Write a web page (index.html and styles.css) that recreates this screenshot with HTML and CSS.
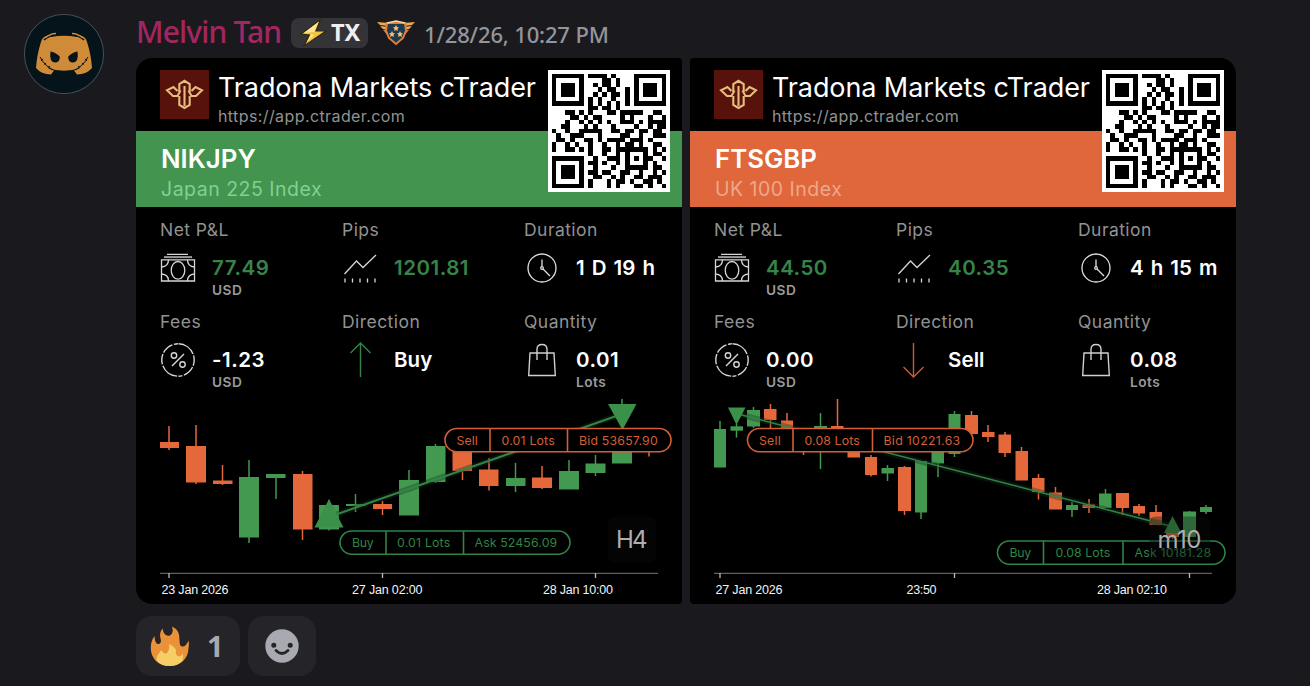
FILE: index.html
```html
<!DOCTYPE html>
<html lang="en">
<head>
<meta charset="utf-8">
<title>Trade results</title>
<link rel="stylesheet" href="styles.css">
</head>
<body>
<svg class="defs" width="0" height="0">
  <symbol id="logo" viewBox="0 0 49 49">
    <g fill="none" stroke="#e6bd7c" stroke-width="2.100">
      <path d="M20.500 20.500L17.500 26H13L7 20.300L13.500 17L17.500 21M19.300 23V14L24.500 10.800L29.700 14V23M28.500 20.500L31.500 26H36L42 20.300L35.500 17L31.500 21"/>
      <path d="M24.500 16V36M19.300 26V35L24.500 38L29.700 35V26"/>
    </g>
  </symbol>
  <symbol id="cash" viewBox="0 0 36 36">
    <g fill="none" stroke="#d6d6d6" stroke-width="1.300">
      <path d="M7 4.300H28M1.500 9.800H34.500V31H1.500Z"/>
      <ellipse cx="18" cy="20.300" rx="6.800" ry="8.800"/>
      <path d="M8.500 9.800Q8.500 16.500 1.500 17M27.500 9.800Q27.500 16.500 34.500 17M1.500 24Q8.500 24.500 8.500 31M34.500 24Q27.500 24.500 27.500 31"/>
    </g>
    <path d="M4 7.100H32" stroke="#9a9a9a" stroke-width="2"/>
  </symbol>
  <symbol id="pips" viewBox="0 0 36 36">
    <g fill="none" stroke="#d6d6d6" stroke-width="1.300">
      <path d="M2.500 24L14.500 11L21 17.500L34 5"/>
      <path d="M3 28.500V32.500M10.500 28.500V32.500M18 28.500V32.500M25.500 28.500V32.500M33 28.500V32.500"/>
    </g>
  </symbol>
  <symbol id="clock" viewBox="0 0 36 36">
    <g fill="none" stroke="#e0e0e0" stroke-width="1.300">
      <circle cx="18" cy="18" r="14"/><circle cx="18" cy="18" r="1.300"/>
      <path d="M18 9.500V16.700M19 19L26 26"/>
    </g>
  </symbol>
  <symbol id="fees" viewBox="0 0 36 36">
    <g fill="none" stroke="#d6d6d6" stroke-width="1.400">
      <circle cx="18" cy="18" r="16.200" stroke-dasharray="18.500 1.500 10.500 1.500 12 1.500 4 1.400" transform="rotate(-88 18 18)"/>
      <circle cx="14" cy="13.500" r="2.700"/><circle cx="22.500" cy="22.500" r="2.700"/>
      <path d="M24 12L12 24"/>
    </g>
  </symbol>
  <symbol id="arrow" viewBox="0 0 36 36">
    <path d="M18.500 35V1M8.500 11L18.500 1L28.500 11" fill="none" stroke="currentColor" stroke-width="1.400"/>
  </symbol>
  <symbol id="bag" viewBox="0 0 36 36">
    <g fill="none" stroke="#cfcfcf" stroke-width="1.400">
      <path d="M6 11H30L31.300 33.500H4.700Z"/>
      <path d="M13 18V7.500Q13 2.500 18 2.500T23 7.500V18"/>
    </g>
  </symbol>
</svg>

<article class="message">
  <svg class="avatar" viewBox="0 0 80 80">
    <circle cx="40" cy="40" r="39.600" fill="#05131a" stroke="#526066" stroke-width=".8"/>
    <path d="M17 28Q18 23.500 22 22L28 20.500L27 23Q40 20.500 53 23L52 20.500L58 22Q62 23.500 63 28Q67 40 68 54Q63 60 53 60.500L50 56.500Q54 55.500 57 53.500Q40 60 23 53.500Q26 55.500 30 56.500L27 60.500Q17 60 12 54Q13 40 17 28Z" fill="#d08b39"/>
    <path d="M20 26Q25 21.500 33 20.500M60 26Q55 21.500 47 20.500" stroke="#05131a" stroke-width="1.600" fill="none"/>
    <path d="M21 24Q26 19.500 32 19.500M59 24Q54 19.500 48 19.500" stroke="#d08b39" stroke-width="1.300" fill="none"/>
    <path d="M26.500 37.500Q31 38 35.800 42.500Q36 48.500 31 48.500Q25 48 26.500 37.500ZM53.500 37.500Q49 38 44.200 42.500Q44 48.500 49 48.500Q55 48 53.500 37.500Z" fill="#05131a"/>
    <path d="M16 43Q20 51 29 56M64 43Q60 51 51 56M17 47L19 45M20 50.500L22 49M24 53.500L26 52M63 47L61 45M60 50.500L58 49M56 53.500L54 52" stroke="#05131a" stroke-width="1" fill="none"/>
  </svg>

  <div class="content">
    <header class="byline">
      <span class="author">Melvin Tan</span>
      <span class="tag">
        <svg width="28" height="28" viewBox="0 0 28 28"><path d="M21 1L2 15L10.500 16L5 27L27 12H17Z" fill="#efc541" stroke="#33270f" stroke-width="1.200"/><path d="M20 2.500L5 14L15 13ZM12 15L8 23L15 16Z" fill="#ffe692"/></svg>
        <span class="tag-name">TX</span>
      </span>
      <svg class="badge" viewBox="0 0 38 28">
        <path d="M0 4L11 5V8L3 7ZM3 8L11 9V12L6 11ZM6 12L11 13L12 17L9 15ZM38 4L27 5V8L35 7ZM35 8L27 9V12L32 11ZM32 12L27 13L26 17L29 15Z" fill="#edaa55"/>
        <path d="M10 5H28L29 13L26 20L19 26L12 20L9 13Z" fill="#1b3a4b" stroke="#e47c3c" stroke-width="2"/>
        <path d="M10 5L19 3L28 5" fill="none" stroke="#ffd596" stroke-width="1.500"/>
        <path d="M19 7l1 2 2 .3-1.500 1.500.4 2.200-1.900-1-1.900 1 .4-2.200L16 9.300l2-.3zM15 13l1 2 2 .3-1.500 1.500.4 2.200-1.900-1-1.900 1 .4-2.200-1.500-1.500 2-.3zM23 13l1 2 2 .3-1.500 1.500.4 2.200-1.900-1-1.900 1 .4-2.200-1.500-1.500 2-.3z" fill="#f7bc72"/>
      </svg>
      <time class="time">1/28/26, 10:27 PM</time>
    </header>

    <div class="gallery">
      <section class="card first">
        <div class="brand">
          <svg class="logo"><use href="#logo"/></svg>
          <div><h2 class="title">Tradona Markets cTrader</h2><p class="url">https://app.ctrader.com</p></div>
        </div>
        <div class="band green"><h3 class="symbol">NIKJPY</h3><p class="desc">Japan 225 Index</p></div>
        <svg class="qr" viewBox="-.8 -.8 26.600 26.600"></svg>
        <div class="stats">
          <div class="stat"><span class="label">Net P&amp;L</span><svg class="icon"><use href="#cash"/></svg><b class="value up">77.49</b><span class="unit">USD</span></div>
          <div class="stat"><span class="label">Pips</span><svg class="icon"><use href="#pips"/></svg><b class="value up">1201.81</b></div>
          <div class="stat"><span class="label">Duration</span><svg class="icon"><use href="#clock"/></svg><b class="value span">1 D 19 h</b></div>
          <div class="stat"><span class="label">Fees</span><svg class="icon"><use href="#fees"/></svg><b class="value">-1.23</b><span class="unit">USD</span></div>
          <div class="stat"><span class="label">Direction</span><svg class="icon buy"><use href="#arrow"/></svg><b class="value side">Buy</b></div>
          <div class="stat"><span class="label">Quantity</span><svg class="icon"><use href="#bag"/></svg><b class="value">0.01</b><span class="unit">Lots</span></div>
        </div>
        <svg class="chart" data-chart="nikkei" viewBox="0 0 546 214"></svg>
      </section>

      <section class="card last">
        <div class="brand">
          <svg class="logo"><use href="#logo"/></svg>
          <div><h2 class="title">Tradona Markets cTrader</h2><p class="url">https://app.ctrader.com</p></div>
        </div>
        <div class="band orange"><h3 class="symbol">FTSGBP</h3><p class="desc">UK 100 Index</p></div>
        <svg class="qr" viewBox="-.8 -.8 26.600 26.600"></svg>
        <div class="stats">
          <div class="stat"><span class="label">Net P&amp;L</span><svg class="icon"><use href="#cash"/></svg><b class="value up">44.50</b><span class="unit">USD</span></div>
          <div class="stat"><span class="label">Pips</span><svg class="icon"><use href="#pips"/></svg><b class="value up">40.35</b></div>
          <div class="stat"><span class="label">Duration</span><svg class="icon"><use href="#clock"/></svg><b class="value span">4 h 15 m</b></div>
          <div class="stat"><span class="label">Fees</span><svg class="icon"><use href="#fees"/></svg><b class="value">0.00</b><span class="unit">USD</span></div>
          <div class="stat"><span class="label">Direction</span><svg class="icon sell"><use href="#arrow"/></svg><b class="value side">Sell</b></div>
          <div class="stat"><span class="label">Quantity</span><svg class="icon"><use href="#bag"/></svg><b class="value">0.08</b><span class="unit">Lots</span></div>
        </div>
        <svg class="chart" data-chart="ftse" viewBox="0 0 546 214"></svg>
      </section>
    </div>

    <footer class="reactions">
      <button class="reaction">
        <svg width="40" height="40" viewBox="0 0 40 40">
          <path d="M38.500 14.500Q36 21 32 20.500Q29.500 20 29.500 14Q30 4 22 .5Q24 7 20 9.500Q14 11 12.500 2.500Q9 7 10.500 12Q12 18 8 18Q5 18 4.500 10Q.8 15 .8 22C.8 33 9 40 19.500 40S38.500 33 38.500 22Q39.500 18 38.500 14.500Z" fill="#ea923a"/>
          <path d="M32.500 27.500Q31 31 28 30Q25 29 26 24Q24 20 19 18Q20 24 17 27Q14 29 11.500 24Q6 30 6.500 34.500Q11 40 19.500 40T32.500 34.500Q34 31 32.500 27.500Z" fill="#f7cd66"/>
        </svg>
        <span class="count">1</span>
      </button>
      <button class="reaction add" aria-label="Add reaction">
        <svg width="34" height="34" viewBox="0 0 34 34"><circle cx="17" cy="17" r="16.700" fill="#a9aab1"/><circle cx="8.800" cy="16.200" r="2.500" fill="#242429"/><circle cx="25.200" cy="16.200" r="2.500" fill="#242429"/><path d="M11 21.500Q17 27.500 23 21.500" fill="none" stroke="#242429" stroke-width="2.800" stroke-linecap="round"/></svg>
      </button>
    </footer>
  </div>
</article>
<script src="app.js"></script>
</body>
</html>
```

FILE: styles.css
```css
* { box-sizing: border-box; }

body {
  margin: 0;
  height: 686px;
  overflow: hidden;
  background: #1a1a1e;
  font-family: Inter, "Liberation Sans", sans-serif;
}

h2, h3, p { margin: 0; font-weight: 400; }

.defs { display: block; height: 0; }

.message { display: flex; gap: 32px; padding: 14px 0 0 24px; }
.avatar { width: 80px; height: 80px; flex: none; }

.byline {
  display: flex;
  align-items: center;
  height: 36px;
  margin-bottom: 8px;
  font-family: "Noto Sans", sans-serif;
  white-space: nowrap;
}
.author { width: 155px; margin-top: -2px; color: #a3275e; font-size: 30px; font-weight: 500; letter-spacing: -.85px; }
.tag {
  display: flex;
  align-items: center;
  gap: 4px;
  width: 77px;
  height: 30px;
  padding-left: 8px;
  border-radius: 8px;
  background: #333338;
  color: #efeff1;
  font-size: 23.5px;
  font-weight: 700;
  margin-top: 2px;
}
.tag-name { margin-top: -2px; }
.badge { width: 38px; height: 28px; margin-left: 9px; }
.time { margin-left: 9px; padding-top: 3px; color: #94959c; font-size: 22px; font-weight: 500; letter-spacing: -.15px; }

.gallery { display: flex; gap: 8px; }
.card {
  position: relative;
  display: flex;
  flex-direction: column;
  width: 546px;
  height: 546px;
  overflow: hidden;
  background: #000;
  border-radius: 4px;
}
.first { border-radius: 16px 4px 4px 16px; }
.last { border-radius: 4px 16px 16px 4px; }

.brand { display: flex; gap: 9px; height: 73px; padding: 12px 24px 0; }
.logo { width: 49px; height: 49px; background: #57120c; }
.title { color: #fff; font-size: 27px; line-height: 35px; letter-spacing: -.1px; white-space: nowrap; }
.url { color: #929292; font-size: 16px; line-height: 22px; letter-spacing: .4px; }

.band { height: 76px; padding: 11px 25px 0; color: #fff; }
.band.green { background: #43944e; }
.band.orange { background: #df673b; }
.symbol { font-size: 25.8px; font-weight: 600; line-height: 34px; }
.desc { font-size: 19.5px; line-height: 26px; letter-spacing: .5px; }
.green .desc { color: #82cf94; }
.orange .desc { color: #eda88b; }

/* The code straddles the brand row and the coloured band. */
.qr { position: absolute; top: 12px; right: 12px; width: 122px; height: 122px; background: #fff; }

.stats {
  display: grid;
  grid-template-columns: repeat(3, 182px);
  grid-template-rows: 78px 78px;
  row-gap: 14px;
  height: 183px;
  padding: 13px 0 0 24px;
}
.stat {
  display: grid;
  grid-template-columns: 36px 1fr;
  grid-template-rows: 20px 14px 28px 16px;
  column-gap: 16px;
}
.label { grid-column: 1 / 3; color: #929292; font-size: 17.5px; line-height: 20px; letter-spacing: .45px; }
.icon { grid-column: 1; grid-row: 2 / 5; width: 36px; height: 36px; margin-top: 10px; }
.buy { color: #348449; }
.sell { color: #c75b35; transform: rotate(180deg); }
.value { grid-column: 2; grid-row: 3; color: #fff; font-size: 20.5px; font-weight: 600; line-height: 28px; letter-spacing: .5px; white-space: nowrap; }
.value.side { letter-spacing: .1px; }
.value.span { letter-spacing: .1px; word-spacing: 1.7px; }
.value.up { color: #37834a; }
.unit { grid-column: 2; grid-row: 4; color: #9a9a9a; font-size: 13.7px; font-weight: 600; line-height: 16px; letter-spacing: .5px; }

.chart { display: block; width: 546px; height: 214px; flex: none; }
.chart .pill { font-size: 12.3px; letter-spacing: .3px; }
.chart .axis { font-family: "Liberation Sans", sans-serif; font-size: 12.5px; fill: #f4f4f4; }
.chart .period { font-size: 24px; fill: #aeaeb0; }

.reactions { display: flex; gap: 8px; margin-top: 12px; }
.reaction {
  display: flex;
  align-items: center;
  gap: 17px;
  width: 104px;
  height: 60px;
  padding: 0 0 0 14px;
  border: 0;
  border-radius: 16px;
  background: #242429;
}
.add { width: 68px; padding-left: 17px; }
.count { margin-top: -2px; color: #a9aab1; font: 700 29px "Noto Sans", sans-serif; letter-spacing: -1px; }
```

FILE: app.js
```js
const GREEN = '#43994f', RED = '#e4683a', LINE = '#348449';

// candle: [direction, left, right, body top, body bottom, wick x, wick top, wick bottom]
const charts = {
  nikkei: {
    candles: [
      ['r',24,43,52,58,33,36,60], ['r',50,70,56,92.500,60,35,94], ['r',77,96.500,90.500,94,86.500,75,95],
      ['g',103,123,87,147.500,113,70,153], ['g',130,149.500,84,88,140,84,109], ['r',157,176.500,84,139.500,166.500,81,150],
      ['g',183,203,115,139.500,193,110,140.500], ['g',210,229.500,114,116,219.500,104,122], ['r',237,256,114,119,246.500,111,125],
      ['g',263,283,90,125.500,273,80,125], ['g',290,309.500,56,92,299.500,54,93], ['r',316.500,336,50,81,326.500,50,90],
      ['r',343,362.500,79.500,96,353,68,100.500], ['g',370,389.500,88,96,379.500,73,102], ['r',396,416,87.500,98,406,76,99],
      ['g',423,443,81,99.500,433,70,99], ['g',449.500,469.500,73.500,83,459.500,65,86], ['g',476,496,45,73.500,486,9,73],
      ['r',511,515,50,55,513,50,66.500]
    ],
    line: [193,127,486,24], width: 2,
    up: '193,109 207.500,137.500 178.500,137.500', down: '472,14 500.500,14 486.500,40',
    sell: { x: 309, y: 38.500, w: 226, div: [354,431.500], text: [['Sell',320.500,21.500],['0.01 Lots',365.500,53.500],['Bid 53657.90',443,79]] },
    buy: { x: 204, y: 141, w: 230, div: [250,327.500], text: [['Buy',216,22],['0.01 Lots',261,53.500],['Ask 52456.09',338.500,83]] },
    period: ['H4',472,48,480,31.500], ticks: [33,246.500,459.500],
    labels: [['23 Jan 2026',25.500,67],['27 Jan 02:00',216,70.500],['28 Jan 10:00',407,70]]
  },
  ftse: {
    candles: [
      ['g',24,36,39,77.500,30,31,77], ['g',40.500,53,36.300,40.700,46.500,34,47.700], ['g',57,70,20,36.500,63.500,17,38],
      ['r',74,86.500,19,30,80.500,14,39], ['r',91,103,30.500,40,97,23,40], ['r',113,114,45,55,113.500,45,65],
      ['g',124,137,36,38,130.500,23,79], ['r',141,153.500,36,39,147.500,9,39], ['r',157.500,170,50,67.500,164,50,67],
      ['r',175,187,67,85,181,65,86.500], ['g',191.500,204,78,83.500,197.500,75,91], ['r',208,221,77,121,214.500,76,125],
      ['g',225,237,71,122.500,231,71,129], ['g',241.500,254,60,73.500,248,60,87], ['g',258.500,270.500,24,64,264.500,21,67],
      ['r',275,288,25,44,281.500,21,44], ['r',292,304.500,42,47,298,35,52], ['r',308.500,321,44.500,63,315,42,67],
      ['r',325.500,338,61,90.500,331.500,57,90], ['r',342,354.500,88,102,348.500,84,109.500], ['r',359,372,102.500,119.500,365.500,97,119],
      ['g',376,388,115,120,382,112,127], ['r',392.500,405,114.500,118,399,109,123], ['g',409,421.500,103.500,118,415.500,99,118],
      ['r',426,439,103,118,432.500,103,125], ['r',443,455,116,123.500,449,114,126], ['r',459.500,472,122,135,466,115,135],
      ['r',476,489,140,147,482.500,140,149], ['g',493,506,121.500,147,499.500,121,147], ['g',510,522,117,122,516,115,124]
    ],
    line: [46,23.500,482,136.500], width: 1.500,
    up: '482.500,126 491.500,143 474,143', down: '38,17.500 55.500,17.500 46.500,35',
    sell: { x: 57.500, y: 38.500, w: 225.500, div: [103,182.500], text: [['Sell',69,22],['0.08 Lots',114.500,55.500],['Bid 10221.63',193.500,77]] },
    buy: { x: 307.500, y: 151, w: 227.500, div: [353.500,433], text: [['Buy',319.500,22],['0.08 Lots',365.500,55],['Ask 10181.28',444.500,77]] },
    period: ['m10',459.500,60.500,467.500,44], ticks: [30,264.500,499.500],
    labels: [['27 Jan 2026',25.500,67],['23:50',216.500,30],['28 Jan 02:10',407,70]]
  }
};

const text = (cls, s, x, y, w, fill) =>
  `<text class="${cls}" x="${x}" y="${y}" textLength="${w}"${fill ? ` fill="${fill}"` : ''}>${s}</text>`;

function pill(p, color) {
  const dividers = p.div.map(x => `M${x} ${p.y}v23.200`).join('');
  return `<rect x="${p.x}" y="${p.y}" width="${p.w}" height="23.200" rx="11.600" fill="#000" stroke="${color}" stroke-width="1.600"/>` +
    `<path d="${dividers}" stroke="${color}" stroke-width="1.600"/>` +
    p.text.map(t => text('pill', t[0], t[1], p.y + 16, t[2], color)).join('');
}

document.querySelectorAll('[data-chart]').forEach(svg => {
  const c = charts[svg.dataset.chart];
  let out = '';
  for (const [d, l, r, t, b, x, wt, wb] of c.candles) {
    const f = d === 'g' ? GREEN : RED;
    out += `<path d="M${l} ${t}H${r}V${b}H${l}Z" fill="${f}"/><path d="M${x} ${wt}V${wb}" stroke="${f}" stroke-width="1.500"/>`;
  }
  const [x1, y1, x2, y2] = c.line;
  out += `<path d="M${x1} ${y1}L${x2} ${y2}" stroke="#123a1c" stroke-opacity=".35" stroke-width="6"/>`;
  out += `<path d="M${x1} ${y1}L${x2} ${y2}" stroke="${LINE}" stroke-width="${c.width}"/>`;
  out += `<polygon points="${c.up}" fill="#3b9149"/><polygon points="${c.down}" fill="#3b9149"/>`;
  out += pill(c.sell, '#d45f37') + pill(c.buy, '#2f8445');
  const [label, px, pw, tx, tw] = c.period;
  out += `<rect x="${px}" y="126.500" width="${pw}" height="45.500" rx="6" fill="#0b0b0e" fill-opacity=".35"/>`;
  out += text('period', label, tx, 157.500, tw);
  out += `<path d="M24 183.300H522" stroke="#777" stroke-width="1"/>`;
  out += c.ticks.map(x => `<path d="M${x} 183V188" stroke="#bbb" stroke-width="1.300"/>`).join('');
  out += c.labels.map(l => text('axis', l[0], l[1], 204.300, l[2])).join('');
  svg.innerHTML = out;
});

const modules = [
  '#######.####.#....#######',
  '#.....#....##.#...#.....#',
  '#.###.#..#.##.#...#.###.#',
  '#.###.#...#.##..#.#.###.#',
  '#.###.#..#.#.##.#.#.###.#',
  '#.....#.#.#..#..#.#.....#',
  '#######.#.#.#.#.#.#######',
  '........##.##.#..........',
  '...##.#.#...##.#####..##.',
  '....##.#.##....#.#...#..#',
  '...#..#.#.#.#..###.#.####',
  '..##...#.#...#....#..#.##',
  '#..#..#####..##.##.##.##.',
  '.#..###...#....##..#..###',
  '.##.#..##.#.####.###.#...',
  '#..#.#..#..#..#.##.#..##.',
  '#..##.#.#..##.#######.#.#',
  '........#..#..#.#...#.##.',
  '#######..#..###.#.#.##..#',
  '#.....#.##.#..#.#...#.#..',
  '#.###.#..#...#..#####.##.',
  '#.###.#.##.##..##..#..#.#',
  '#.###.#..##..#.#..##.###.',
  '#.....#.#...#.##.#..##.#.',
  '#######.#...#.#...##.#..#'
];
const qrPath = modules.map((row, y) =>
  [...row].map((m, x) => m === '#' ? `M${x} ${y}h1v1h-1z` : '').join('')).join('');
document.querySelectorAll('.qr').forEach(svg => {
  svg.innerHTML = `<path d="${qrPath}" fill="#000" shape-rendering="crispEdges"/>`;
});
```
